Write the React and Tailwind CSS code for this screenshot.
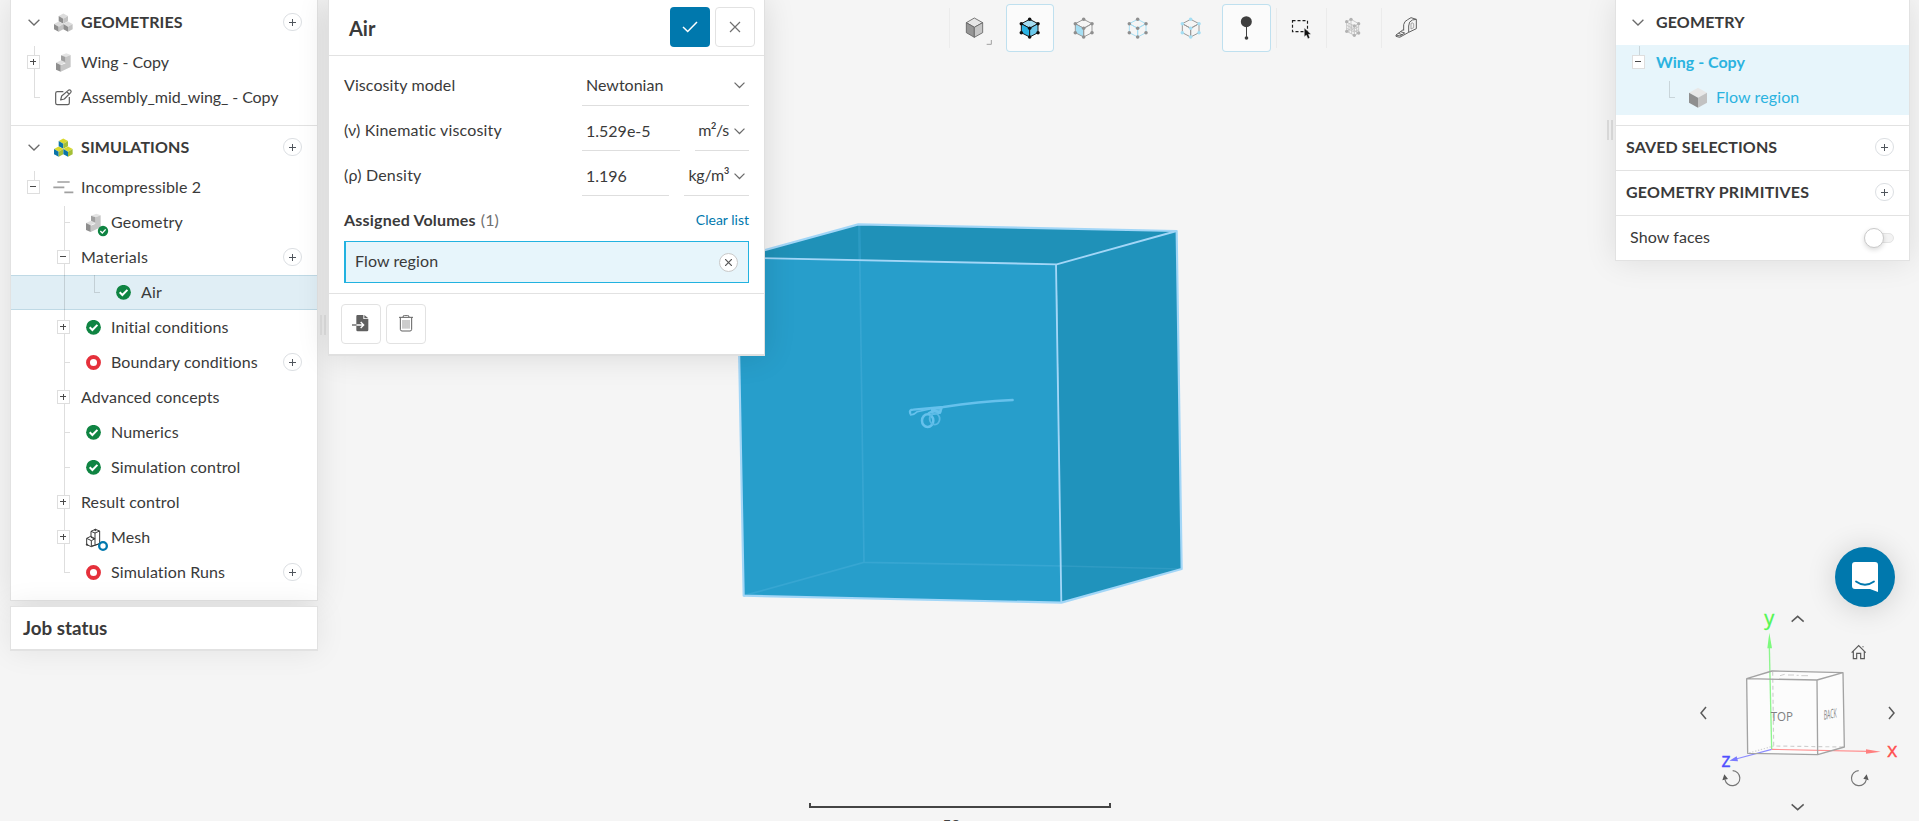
import React from "react";

/* ---------- small shared pieces ---------- */

const GREY = ["#dcdcdc", "#8e8e8e", "#c2c2c2"];
const VIVID = ["#d9d92f", "#0a74a8", "#a4bf35"];

function IsoCube({ cx, cy, r, colors }) {
  const w = r * 0.9;
  const h = r / 2;
  const [top, left, right] = colors;
  return (
    <g>
      <polygon points={`${cx},${cy - r} ${cx + w},${cy - h} ${cx},${cy} ${cx - w},${cy - h}`} fill={top} />
      <polygon points={`${cx - w},${cy - h} ${cx},${cy} ${cx},${cy + r} ${cx - w},${cy + h}`} fill={left} />
      <polygon points={`${cx + w},${cy - h} ${cx},${cy} ${cx},${cy + r} ${cx + w},${cy + h}`} fill={right} />
    </g>
  );
}

/* Icons fill a 30x35 tree cell, drawn on a grid three times as fine. */
function CubesIcon({ colors }) {
  return (
    <svg width="30" height="35" viewBox="147 15 90 105" className="shrink-0">
      <IsoCube cx={190} cy={56} r={15.5} colors={colors} />
      <IsoCube cx={176} cy={80} r={15.5} colors={colors} />
      <IsoCube cx={204} cy={80} r={15.5} colors={colors} />
    </svg>
  );
}

function PartShape() {
  return (
    <g>
      <polygon points="183,166 199,160 212,165 197,171" fill="#e4e4e4" />
      <polygon points="183,166 197,171 197,190 183,183" fill="#a0a0a0" />
      <polygon points="197,171 212,165 212,201 182,215 182,196 197,190" fill="#c6c6c6" />
      <polygon points="168,188 183,181 197,187 182,195" fill="#dedede" />
      <polygon points="168,188 182,195 182,215 168,209" fill="#8e8e8e" />
    </g>
  );
}

function PartIcon() {
  return (
    <svg width="30" height="35" viewBox="147 135 90 105">
      <PartShape />
    </svg>
  );
}

function PartDoneIcon() {
  return (
    <svg width="30" height="35" viewBox="237 15 90 105">
      <g transform="translate(90 -119)">
        <PartShape />
      </g>
      <circle cx="309" cy="93" r="15.5" fill="#0f8442" />
      <path d="M301 93l6 6 10-11" fill="none" stroke="#fff" strokeWidth="4" />
    </svg>
  );
}

function MeshIcon() {
  return (
    <svg width="30" height="35" viewBox="237 300 90 105" fill="none" stroke="#3a3a3a" strokeWidth="3">
      <path d="M273 334l13-6 13 5-14 6zM273 334v18M285 339v18M299 333v38l-24 7M260 355l12-6 13 7-11 6zM260 355v19l14 6v-18M285 356v18M274 380l25-9M273 352l12 5" />
      <circle cx="286" cy="330" r="2" fill="#3a3a3a" />
      <circle cx="261" cy="374" r="2" fill="#3a3a3a" />
      <circle cx="309" cy="378" r="11.5" fill="#fff" stroke="#0078ad" strokeWidth="7" />
    </svg>
  );
}

function CheckIcon() {
  return (
    <svg width="15" height="15" viewBox="0 0 15 15" className="mr-px">
      <circle cx="7.5" cy="7.3" r="7.4" fill="#0f8442" />
      <path d="M3.700 7.300l2.700 2.700 5-5.100" fill="none" stroke="#fff" strokeWidth="2" />
    </svg>
  );
}

function RingIcon() {
  return (
    <svg width="15" height="15" viewBox="0 0 15 15" className="mr-px">
      <circle cx="7.5" cy="7.5" r="5.5" fill="#fff" stroke="#e5303b" strokeWidth="3.9" />
    </svg>
  );
}

function EditIcon() {
  return (
    <svg width="30" height="35" viewBox="147 240 90 105" fill="none" stroke="#606060" strokeWidth="3.6" strokeLinejoin="round">
      <path d="M190 275h-18q-5 0-5 5v29q0 5 5 5h31q5 0 5-5v-18" />
      <path d="M182 300l3-12 20-17q4-3 7 0t0 7l-19 19zM200 275l7 7" />
    </svg>
  );
}

function FlowLinesIcon() {
  return (
    <svg width="30" height="35" viewBox="147 510 90 105" stroke="#a0a0a0" strokeWidth="5">
      <path d="M172 546h37M160 562h33M193 577h27" />
    </svg>
  );
}

function Chevron({ className = "", size = 12 }) {
  return (
    <svg className={className} width={size} height={size / 2 + 1} viewBox="0 0 12 7" fill="none" stroke="#6b6b6b" strokeWidth="1.3">
      <path d="M0.6 0.7L6 6l5.4-5.3" />
    </svg>
  );
}

function AddButton({ className }) {
  return (
    <span className={className}>
      <button className="flex h-[18px] w-[19px] items-center justify-center rounded-full border border-[#dcdfe3] bg-white">
        <svg width="7" height="7" viewBox="0 0 7 7" fill="#50555c" shapeRendering="crispEdges">
          <path d="M3 0h1v7h-1zM0 3h7v1h-7z" />
        </svg>
      </button>
    </span>
  );
}

/* One 30px column of the tree: connector lines and the expander box. */
function Cell({ up, down, tick, box }) {
  return (
    <svg width="30" height="35" viewBox="0 0 30 35" className="shrink-0" shapeRendering="crispEdges">
      <g fill="#000" fillOpacity="0.13">
        {up !== undefined && <rect x="15" y={up} width="1" height={18 - up} />}
        {down && <rect x="15" y="18" width="1" height="17" />}
        {tick && <rect x="16" y="17" width="5" height="1" />}
      </g>
      {box && <rect x="8" y="10" width="13" height="14" fill="#dedede" />}
      {box && <rect x="9" y="11" width="11" height="12" fill="#fff" />}
      {box && <rect x="11" y="16" width="6" height="1" fill="#4a4a4a" />}
      {box === "+" && <rect x="14" y="14" width="1" height="6" fill="#4a4a4a" />}
    </svg>
  );
}

function IconCell({ children }) {
  return <span className="flex h-[35px] w-[30px] shrink-0 items-center justify-center">{children}</span>;
}

function Row({ cells, icon, label, add, selected }) {
  return (
    <div
      className={
        selected
          ? "flex h-[35px] items-start bg-[#e0eef5] pl-2 shadow-[inset_0_1px_0_#bfd9e5,inset_0_-1px_0_#bfd9e5]"
          : "flex h-[35px] items-start pl-2"
      }
    >
      {cells.map((c, i) => (
        <Cell key={i} {...c} />
      ))}
      {icon && <IconCell>{icon}</IconCell>}
      <span className="pl-[2px] leading-[34px] tracking-[0.12px] whitespace-nowrap">{label}</span>
      {add && <AddButton className="mt-2 mr-[15px] ml-auto" />}
    </div>
  );
}

function Handle({ className }) {
  return (
    <div className={className}>
      <span className="h-5 w-[2px] bg-[#dedede]" />
      <span className="h-5 w-[2px] bg-[#dedede]" />
    </div>
  );
}

/* ---------- left tree ---------- */

const blank = {};
const through = { up: 0, down: true };

function LeftPanel() {
  return (
    <div className="flex w-[308px] shrink-0 flex-col">
      <div className="h-[601px] border-x border-b border-[#e2e2e2] bg-white shadow-[0_0_30px_rgba(0,0,0,0.10)]">
        <div className="flex h-[45px] items-start pl-[17px]">
          <Chevron className="mt-[19px]" />
          <span className="mt-[5px] ml-[9px] flex"><CubesIcon colors={GREY} /></span>
          <span className="pl-[2px] leading-[44px] font-bold tracking-[0.12px]">GEOMETRIES</span>
          <AddButton className="mt-[13px] mr-[15px] ml-auto" />
        </div>
        <Row cells={[{ up: 1, down: true, box: "+" }]} icon={<PartIcon />} label={<span className="tracking-[-0.04px]">Wing - Copy</span>} />
        <Row cells={[{ up: 0, tick: true }]} icon={<EditIcon />} label={<span className="tracking-[-0.09px]">Assembly_mid_wing_ - Copy</span>} />
        <div className="mt-[10px] border-t border-[#e2e2e2]" />
        <div className="flex h-[44px] items-start pl-[17px]">
          <Chevron className="mt-[18px]" />
          <span className="mt-[4px] ml-[9px] flex"><CubesIcon colors={VIVID} /></span>
          <span className="pl-[2px] leading-[42px] font-bold tracking-[0.1px]">SIMULATIONS</span>
          <AddButton className="mt-[12px] mr-[15px] ml-auto" />
        </div>
        <Row cells={[{ up: 1, box: "-" }]} icon={<FlowLinesIcon />} label="Incompressible 2" />
        <Row cells={[blank, { up: 1, down: true, tick: true }]} icon={<PartDoneIcon />} label={<span className="tracking-[0.2px]">Geometry</span>} />
        <Row cells={[blank, { ...through, box: "-" }]} label={<span className="tracking-[0.25px]">Materials</span>} add />
        <Row cells={[blank, through, { up: 0, tick: true }]} icon={<CheckIcon />} label="Air" selected />
        <Row cells={[blank, { ...through, box: "+" }]} icon={<CheckIcon />} label="Initial conditions" />
        <Row cells={[blank, { ...through, tick: true }]} icon={<RingIcon />} label="Boundary conditions" add />
        <Row cells={[blank, { ...through, box: "+" }]} label="Advanced concepts" />
        <Row cells={[blank, { ...through, tick: true }]} icon={<CheckIcon />} label="Numerics" />
        <Row cells={[blank, { ...through, tick: true }]} icon={<CheckIcon />} label="Simulation control" />
        <Row cells={[blank, { ...through, box: "+" }]} label="Result control" />
        <Row cells={[blank, { ...through, box: "+" }]} icon={<MeshIcon />} label="Mesh" />
        <Row cells={[blank, { up: 0, tick: true }]} icon={<RingIcon />} label="Simulation Runs" add />
      </div>
      <div className="mt-[5px] flex h-[45px] items-center border border-b-2 border-[#e2e2e2] bg-white pl-[12px] text-[18.8px] font-bold shadow-[0_0_30px_rgba(0,0,0,0.08)]">
        Job status
      </div>
    </div>
  );
}

/* ---------- material dialog ---------- */

function Field({ label, children }) {
  return (
    <div className="flex h-[45px]">
      <span className="w-[238px] shrink-0 pt-[14px]">{label}</span>
      <div className="flex flex-1 justify-between">{children}</div>
    </div>
  );
}

function Exponent({ children }) {
  return <span className="self-start text-[9px] leading-[12px] font-bold">{children}</span>;
}

function AirDialog() {
  return (
    <div className="flex h-[356px] w-[437px] shrink-0 flex-col border-x border-b-2 border-[#e0e0e0] bg-white shadow-[0_0_30px_rgba(0,0,0,0.12)]">
      <div className="flex h-[56px] items-center border-b border-[#e2e2e2] pr-[9px] pl-[20px]">
        <h2 className="text-[20px] font-bold">Air</h2>
        <button className="mb-px ml-auto flex size-10 items-center justify-center rounded bg-[#0078ad]">
          <svg width="16" height="12" viewBox="0 0 16 12" fill="none" stroke="#fff" strokeWidth="1.5">
            <path d="M1 6l4.700 4.500L15 1" />
          </svg>
        </button>
        <button className="mb-px ml-[5px] flex size-10 items-center justify-center rounded border border-[#e2e2e2]">
          <svg width="12" height="12" viewBox="0 0 12 12" stroke="#707070" strokeWidth="1.2">
            <path d="M1 1l10 10M11 1L1 11" />
          </svg>
        </button>
      </div>
      <div className="flex h-[238px] flex-col border-b border-[#e2e2e2] px-[15px] pt-[5px]">
        <Field label={<span className="tracking-[0.08px]">Viscosity model</span>}>
          <div className="flex w-full items-start border-b border-[#dedede] pt-[14px] pr-1 pl-[4px]">
            Newtonian
            <Chevron size={11} className="mt-[7px] ml-auto" />
          </div>
        </Field>
        <Field label={<span className="tracking-[0.16px]">(ν) Kinematic viscosity</span>}>
          <div className="w-[98px] border-b border-[#dedede] pt-[15px] pl-[4px]">1.529e-5</div>
          <div className="flex w-[54px] items-start justify-end border-b border-[#dedede] pt-[14px] pr-1 tracking-[-0.3px] whitespace-nowrap">
            m<Exponent>2</Exponent>/s
            <Chevron size={11} className="mt-[8px] ml-[5px] shrink-0" />
          </div>
        </Field>
        <Field label={<span className="tracking-[0.2px]">(ρ) Density</span>}>
          <div className="w-[87px] border-b border-[#dedede] pt-[15px] pl-[4px]">1.196</div>
          <div className="flex w-[65px] items-start justify-end border-b border-[#dedede] pt-[14px] pr-1 tracking-[-0.2px] whitespace-nowrap">
            kg/m<Exponent>3</Exponent>
            <Chevron size={11} className="mt-[8px] ml-[5px] shrink-0" />
          </div>
        </Field>
        <div className="flex h-[45px] items-center pb-[1px]">
          <span className="pt-[4px] font-bold tracking-[0.2px]">Assigned Volumes</span>
          <span className="pt-[4px] pl-[5px] tracking-[0.1px] text-[#707070]">(1)</span>
          <span className="ml-auto pt-[4px] text-[14px] text-[#0078ad]">Clear list</span>
        </div>
        <div className="flex h-[42px] items-center border border-l-2 border-[#22b2e0] bg-[#e7f5fb] pr-[10px] pl-[9px]">
          <span className="pb-[2px] tracking-[0.1px]">Flow region</span>
          <button className="ml-auto flex size-[19px] items-center justify-center rounded-full border border-[#c9c9c9] bg-white">
            <svg width="7" height="7" viewBox="0 0 7 7" stroke="#555" strokeWidth="1.2">
              <path d="M0 0l7 7M7 0L0 7" />
            </svg>
          </button>
        </div>
      </div>
      <div className="flex gap-[5px] pt-[10px] pl-[12px]">
        <button className="flex size-10 items-center justify-center rounded border border-[#e2e2e2]">
          <svg width="18" height="18" viewBox="98 404 54 54">
            <path d="M114 404h18v12h15v33q0 4-4 4h-28q-4 0-4-4v-41q0-4 3-4zM135 404l12 10h-12z" fill="#606060" />
            <path d="M111 434h22M124 425l9 9-9 9" fill="none" stroke="#fff" strokeWidth="4" />
            <path d="M98 434h13" stroke="#606060" strokeWidth="4" />
          </svg>
        </button>
        <button className="flex size-10 items-center justify-center rounded border border-[#e2e2e2]">
          <svg width="16" height="18" viewBox="234 404 48 54" fill="none" stroke="#606060" strokeWidth="3">
            <path d="M237 411h42M249 410q0-5 5-5h8q5 0 5 5M241 412v35q0 5 5 5h24q5 0 5-5v-35" />
            <path d="M249 419v26M255 419v26M261 419v26M267 419v26" strokeWidth="2.400" stroke="#808080" />
          </svg>
        </button>
      </div>
    </div>
  );
}

/* ---------- toolbar ---------- */

function CubeFrame({ cx, stroke, dot, top = "none", left = "none", right = "none", sw = 3 }) {
  const pts = [[cx, 58], [cx + 25, 71], [cx + 25, 98], [cx, 111], [cx - 25, 98], [cx - 25, 71], [cx, 85]];
  return (
    <g strokeLinejoin="round">
      <polygon points={`${cx},58 ${cx + 25},71 ${cx},85 ${cx - 25},71`} fill={top} stroke={stroke} strokeWidth={sw} />
      <polygon points={`${cx - 25},71 ${cx},85 ${cx},111 ${cx - 25},98`} fill={left} stroke={stroke} strokeWidth={sw} />
      <polygon points={`${cx + 25},71 ${cx},85 ${cx},111 ${cx + 25},98`} fill={right} stroke={stroke} strokeWidth={sw} />
      {dot && pts.map(([x, y], i) => <circle key={i} cx={x} cy={y} r="5.300" fill={dot} />)}
    </g>
  );
}

function Tool({ box, children }) {
  return (
    <svg width="48" height="48" viewBox={box} className="shrink-0">
      {children}
    </svg>
  );
}

function Separator({ className }) {
  return <span className={className} />;
}

function Toolbar() {
  return (
    <div className="ml-[184px] flex h-[52px] shrink-0 items-start pt-1">
      <Separator className="mt-1 h-10 w-px bg-[#ececec]" />
      <Tool box="60 12 144 144">
        <g stroke="#606060" strokeWidth="2.500" strokeLinejoin="round">
          <polygon points="133,54 158,68 133,82 109,68" fill="#e6e6e6" />
          <polygon points="109,68 133,82 133,112 109,98" fill="#969696" />
          <polygon points="158,68 133,82 133,112 158,98" fill="#c6c6c6" />
        </g>
        <path d="M184 120v13h-14" fill="none" stroke="#a0a0a0" strokeWidth="3" />
      </Tool>
      <div className="ml-[8px] flex gap-[6px]">
        <div className="flex size-12 rounded bg-[#fbfbfb] shadow-[inset_0_0_0_1px_#bfe0ef]">
          <Tool box="228 12 144 144">
            <CubeFrame cx={299} stroke="#1a1a1a" dot="#101010" top="#a5def3" left="#2bb3e3" right="#6cc9ec" />
          </Tool>
        </div>
        <Tool box="390 12 144 144">
          <CubeFrame cx={461} stroke="#9a9a9a" dot="#8f8f8f" left="#a5def3" />
        </Tool>
        <Tool box="552 12 144 144">
          <CubeFrame cx={623} stroke="#a5def3" dot="#8f8f8f" />
        </Tool>
        <Tool box="714 12 144 144">
          <CubeFrame cx={782} stroke="#9a9a9a" dot="#a5def3" />
        </Tool>
        <div className="flex h-12 w-[49px] rounded bg-[#fbfbfb] shadow-[inset_0_0_0_1px_#bfe0ef]">
          <Tool box="876 12 144 144">
            <circle cx="949" cy="65" r="16.500" fill="#3f3f3f" />
            <path d="M949.500 80v33" stroke="#3f3f3f" strokeWidth="3" />
            <circle cx="949.500" cy="114" r="5.500" fill="#3f3f3f" />
          </Tool>
        </div>
      </div>
      <Separator className="mt-1 ml-[5px] h-10 w-px bg-[#ebebeb]" />
      <Tool box="1041 12 144 144">
        <rect x="1087.500" y="62" width="45" height="33" fill="none" stroke="#1c1c1c" strokeWidth="3.500" strokeDasharray="9 6" />
        <path d="M1123 84v26l6-5 5 11 5-3-4-10h8z" fill="#111" stroke="#f5f5f5" strokeWidth="1" />
      </Tool>
      <Separator className="mt-1 ml-px h-10 w-px bg-[#ebebeb]" />
      <div className="ml-px flex">
        <Tool box="1194 12 144 144">
          <g fill="none" stroke="#c0c0c0" strokeWidth="2.500">
            <path d="M1250 66l13-8 23 13-13 7zM1250 66v28l23 12V78M1286 71v28l-13 7M1257 69v29M1265 73v29M1250 76l23 11 13-7M1250 85l23 11 13-7M1280 75v28M1263 58v28l-13 8M1263 86l23 13" />
          </g>
          {[[1250, 65], [1263, 58], [1286, 71], [1273, 78], [1250, 94], [1273, 106], [1286, 99]].map(([x, y], i) => (
            <circle key={i} cx={x} cy={y} r="5" fill="#b2b2b2" />
          ))}
        </Tool>
      </div>
      <Separator className="mt-1 ml-[5px] h-10 w-px bg-[#ebebeb]" />
      <Tool box="1356 12 144 144">
        <g fill="none" stroke="#606060" strokeWidth="3" strokeLinejoin="round">
          <path d="M1421 92V74Q1423 63 1433 59L1443 53L1459 58V86L1436 97V78Q1436 64 1447 60L1459 58" />
          <path d="M1421 88L1398 105L1398 109L1409 112L1436 97M1398 105L1410 108L1424 99M1405 100L1416 104M1412 95L1424 99" />
          <path d="M1443 70Q1450 66 1451 72V83L1443 87Z" strokeWidth="2.200" stroke="#8a8a8a" />
        </g>
      </Tool>
    </div>
  );
}

/* ---------- right panel ---------- */

function RightPanel() {
  return (
    <div className="mr-[9px] h-[261px] w-[295px] shrink-0 border-x border-b border-[#e2e2e2] bg-white shadow-[0_0_30px_rgba(0,0,0,0.10)]">
      <div className="flex h-[45px] items-start pl-4">
        <Chevron className="mt-[19px]" />
        <span className="pl-[12px] leading-[44px] font-bold tracking-[0.15px]">GEOMETRY</span>
      </div>
      <div className="bg-[#e7f5fb] text-[#2bb3e0]">
        <Row cells={[{ up: 1, box: "-" }]} label={<b className="tracking-[0px]">Wing - Copy</b>} />
        <Row
          cells={[blank, { up: 1, tick: true }]}
          icon={
            <svg width="30" height="35" viewBox="252 240 90 105">
              <IsoCube cx={294} cy={293} r={30} colors={["#e8e8e8", "#8f8f8f", "#c2c2c2"]} />
            </svg>
          }
          label="Flow region"
        />
      </div>
      <div className="mt-[10px] flex h-[45px] items-start border-t border-[#e2e2e2] pl-[10px] leading-[42px] font-bold tracking-[0.12px]">
        SAVED SELECTIONS
        <AddButton className="mt-[12px] mr-[15px] ml-auto" />
      </div>
      <div className="flex h-[45px] items-start border-t border-[#e2e2e2] pl-[10px] leading-[42px] font-bold tracking-[0.22px]">
        GEOMETRY PRIMITIVES
        <AddButton className="mt-[12px] mr-[15px] ml-auto" />
      </div>
      <div className="flex h-[45px] items-center border-t border-[#e2e2e2] pr-[15px] pl-[14px]">
        <span className="pb-[2px] tracking-[0.1px]">Show faces</span>
        <span className="ml-auto flex items-center">
          <span className="z-10 size-5 rounded-full border border-[#c9c9c9] bg-white shadow-[0_2px_5px_rgba(0,0,0,0.15)]" />
          <span className="-ml-[10px] h-[10px] w-5 rounded-full border border-[#e4e4e4] bg-[#f3f3f3]" />
        </span>
      </div>
    </div>
  );
}

/* ---------- 3D scene ---------- */

function FlowVolume() {
  return (
    <svg className="absolute top-[200px] left-[730px]" width="470" height="420" viewBox="0 0 1410 1260">
      <polygon points="385,73 1340,93 980,193 22,173" fill="#1f91b8" />
      <polygon points="22,173 980,193 994,1208 41,1187" fill="#279ecb" />
      <polygon points="980,193 1340,93 1355,1107 994,1208" fill="#2093bc" />
      <g fill="none" stroke="#37a6d2" strokeWidth="5">
        <path d="M388 75L402 1087L41 1187M402 1087L994 1098" />
        <path d="M994 1098L1355 1107" stroke="#2f9bc3" />
        <path d="M388 75v108" stroke="#2d9ac2" />
      </g>
      <g fill="none" stroke="#a2d6f7" strokeWidth="6.500" strokeLinejoin="round">
        <path d="M385 73L1340 93L1355 1107L994 1208L41 1187L22 173Z" />
        <path d="M22 173L980 193L1340 93M978 193L994 1208" strokeWidth="5.500" />
      </g>
      <g fill="none" stroke="#66c1ec" strokeLinecap="round">
        <path d="M541 641Q536 629 550 629L640 621Q745 605 848 600" strokeWidth="7" />
        <path d="M542 645Q552 645 562 635L600 627" strokeWidth="5" />
        <path d="M606 626h28l-4 12-22 4zM596 640l14-8 22 3" strokeWidth="7" />
        <ellipse cx="593" cy="662" rx="17" ry="19" strokeWidth="7.500" />
        <ellipse cx="614" cy="657" rx="15" ry="17" strokeWidth="5.500" stroke="#5ab9e5" />
      </g>
    </svg>
  );
}

function Scale() {
  return (
    <div className="absolute top-[803px] left-[809px] flex w-[302px] flex-col items-center">
      <div className="h-[5px] w-full border-x-2 border-b-2 border-[#444]" />
      <span className="mt-[7px] text-[16px] leading-[20px] font-bold text-[#444]">50 m</span>
    </div>
  );
}

function ViewCube() {
  return (
    <svg className="absolute top-[600px] left-[1680px] font-['Open_Sans','Noto_Sans',sans-serif]" width="239" height="221" viewBox="0 0 717 663">
      <polygon points="200,236 276,213 489,218 493,441 413,464 203,460" fill="#fcfcfc" />
      <g fill="none" stroke="#cfcfcf" strokeWidth="3.500" strokeDasharray="12 9">
        <path d="M278 215L281 438L493 441" />
        <path d="M281 438L203 460" strokeDasharray="4 5" />
      </g>
      <path d="M268 140L275 447" stroke="#8df58d" strokeWidth="4" />
      <path d="M268 98l8 47h-14z" fill="#7dfa7d" />
      <path d="M275 448L562 454" stroke="#ff8f8f" strokeWidth="3.500" />
      <path d="M602 455l-44-7v13z" fill="#ff7f7f" />
      <path d="M275 448L168 477" stroke="#8c8cff" strokeWidth="3.500" />
      <path d="M148 482l22-13 4 15z" fill="#7a7aff" />
      <g fill="none" stroke="#a3a3a3" strokeWidth="4" strokeLinejoin="round">
        <path d="M200 236L411 240L413 464L203 460ZM200 236L276 213L489 218L493 441L413 464M411 240L489 218" />
      </g>
      <path d="M300 227l14-4M324 225h18M350 226h6M364 227h20" stroke="#b4b4b4" strokeWidth="2" />
      <text x="272" y="363" fontSize="36" fill="#808080" textLength="67" lengthAdjust="spacingAndGlyphs">TOP</text>
      <text transform="translate(431 359) skewY(-9) scale(0.400 1)" fontSize="39" fill="#858585">BACK</text>
      <text x="253" y="74" fontSize="60" fill="#52f552" stroke="#52f552" strokeWidth="1">y</text>
      <text x="621" y="471" fontSize="60" fill="#ff5050" stroke="#ff5050" strokeWidth="1">x</text>
      <text x="124" y="500" fontSize="60" fill="#5050ff" stroke="#5050ff" strokeWidth="1">z</text>
      <g fill="none" stroke="#5a5a5a" strokeWidth="4.500">
        <path d="M335 65l18-16 18 16M335 613l18 16 18-16M78 321l-15 18 15 18M627 321l15 18-15 18" />
        <path d="M515 158l21-21 21 21M520 154v22h10v-16h12v16h11v-22M549 142v-3" strokeWidth="3.500" />
      </g>
      <g fill="none" stroke="#757575" strokeWidth="3.500">
        <path d="M158 512A22.500 22.500 0 1 1 135 539" />
        <path d="M536 512A22.500 22.500 0 1 0 559 539" />
      </g>
      <path d="M133 523l-6 18 17-4zM560 523l6 18-16-5z" fill="#5a5a5a" />
    </svg>
  );
}

function ChatButton() {
  return (
    <button className="absolute top-[547px] left-[1835px] flex size-[60px] items-center justify-center rounded-full bg-[#0078ad] shadow-[0_2px_30px_rgba(0,0,0,0.16)]">
      <svg width="28" height="32" viewBox="0 0 28 32">
        <path d="M4 1h20q3 0 3 3v27l-8-3H4q-3 0-3-3V4q0-3 3-3z" fill="#fff" />
        <path d="M5 20.500q9 6.500 18 0" fill="none" stroke="#0078ad" strokeWidth="1.800" strokeLinecap="round" />
      </svg>
    </button>
  );
}

export default function App() {
  return (
    <div className="relative h-[821px] w-full overflow-hidden bg-[#f5f5f5] font-['Lato',sans-serif] text-[16px] leading-[20px] text-[#3a3a3a] [font-variant-ligatures:none]">
      <FlowVolume />
      <Scale />
      <ViewCube />
      <div className="relative flex items-start pl-[10px]">
        <LeftPanel />
        <Handle className="mt-[315px] flex w-[10px] shrink-0 gap-[2px] pl-[2px]" />
        <AirDialog />
        <Toolbar />
        <Handle className="mt-[120px] ml-auto flex w-[8px] shrink-0 gap-[2px]" />
        <RightPanel />
      </div>
      <ChatButton />
    </div>
  );
}
